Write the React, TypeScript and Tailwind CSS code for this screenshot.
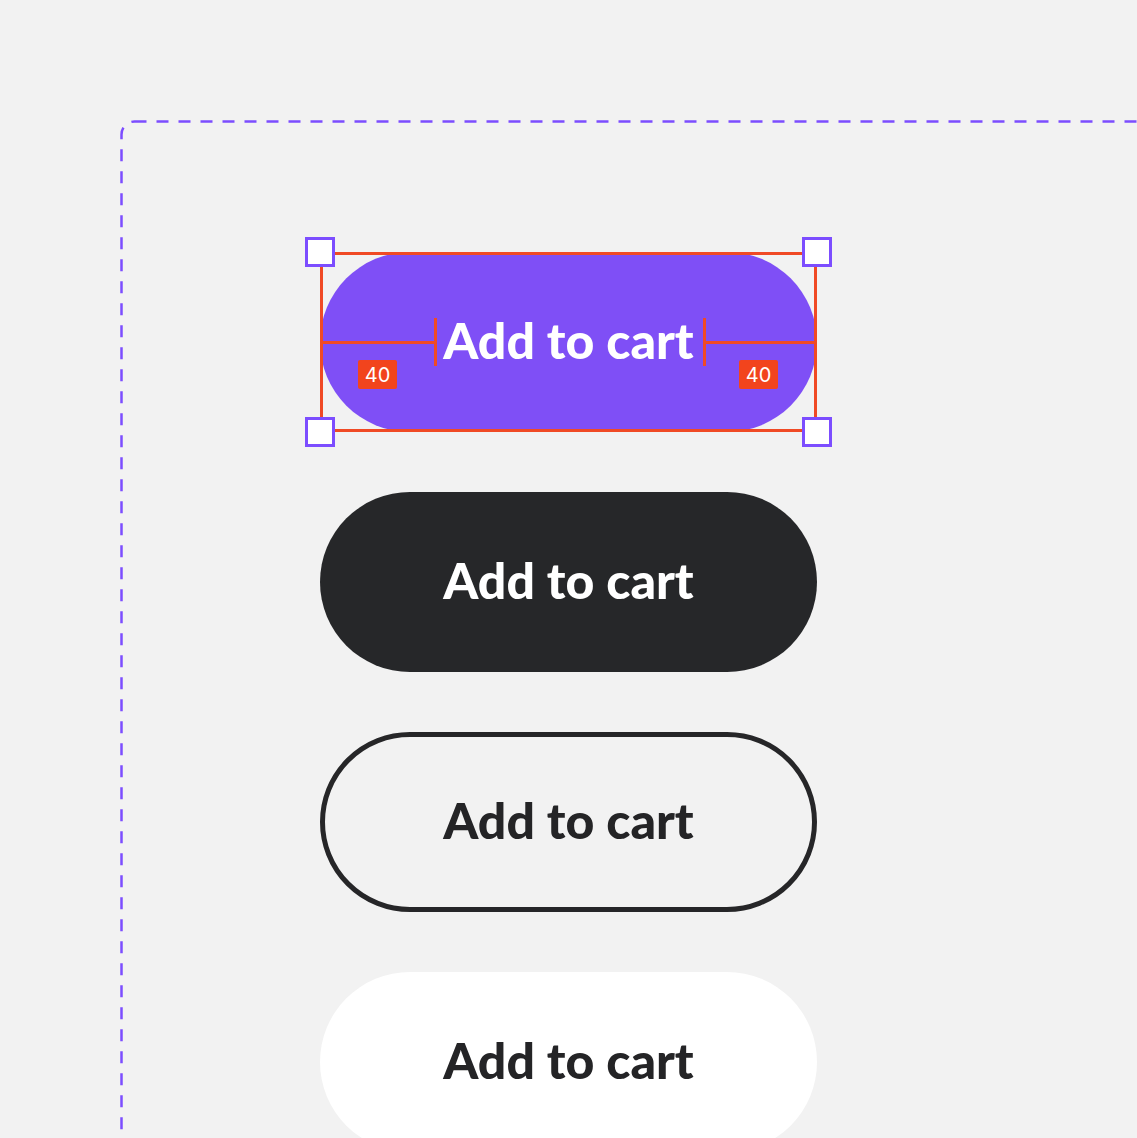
const label = "Add to cart";
const textCls = "pb-[4px] text-[50px] font-black font-['Lato',sans-serif] tracking-[0px]";

function Handle({ className }: { className: string }) {
  return (
    <div
      className={`absolute w-[30px] h-[30px] bg-white border-[3px] border-[#7c4dff] ${className}`}
    />
  );
}

function Badge() {
  return (
    <div className="w-[39px] h-[29px] rounded-[2px] bg-[#f2441d] flex items-center justify-center text-white text-[20px] font-normal leading-none font-['Inter',sans-serif]">
      40
    </div>
  );
}

function SelectedButton() {
  return (
    <div className="relative w-[497px] h-[180px]">
      <button className={`w-full h-full rounded-full bg-[#7f4ff6] text-white ${textCls}`}>
        {label}
      </button>

      {/* selection + spacing overlay */}
      <div className="absolute inset-0 border-[3px] border-[#f04a25] pointer-events-none" />
      <div className="absolute inset-0 flex items-center pointer-events-none">
        <div className="w-[114px] h-[3px] bg-[#f04a25]" />
        <div className="w-[3px] h-[48px] bg-[#f04a25]" />
        <div className="flex-1" />
        <div className="w-[3px] h-[48px] bg-[#f04a25]" />
        <div className="w-[111px] h-[3px] bg-[#f04a25]" />
      </div>
      <div className="absolute left-[38px] right-[39px] top-[108px] flex justify-between">
        <Badge />
        <Badge />
      </div>
      <Handle className="-left-[15px] -top-[15px]" />
      <Handle className="-right-[15px] -top-[15px]" />
      <Handle className="-left-[15px] -bottom-[15px]" />
      <Handle className="-right-[15px] -bottom-[15px]" />
    </div>
  );
}

export default function App() {
  return (
    <div className="w-[1137px] h-[1138px] bg-[#f2f2f2] overflow-hidden pt-[120px] pl-[120px]">
      <div className="relative w-[1100px] h-[1100px]">
        {/* dashed frame */}
        <svg className="absolute inset-0 pointer-events-none" width="1100" height="1100">
          <rect
            x="1.5"
            y="1.5"
            width="1200"
            height="1200"
            rx="13"
            fill="none"
            stroke="#7c4dff"
            strokeWidth="2.5"
            strokeDasharray="12 10"
          />
        </svg>

        <div className="flex flex-col gap-[60px] pl-[200px] pt-[132px]">
          <SelectedButton />
          <button className={`w-[497px] h-[180px] rounded-full bg-[#262729] text-white ${textCls}`}>
            {label}
          </button>
          <button className={`w-[497px] h-[180px] rounded-full border-[5px] border-[#262628] text-[#242426] ${textCls}`}>
            {label}
          </button>
          <button className={`w-[497px] h-[180px] rounded-full bg-white text-[#242426] ${textCls}`}>
            {label}
          </button>
        </div>
      </div>
    </div>
  );
}
